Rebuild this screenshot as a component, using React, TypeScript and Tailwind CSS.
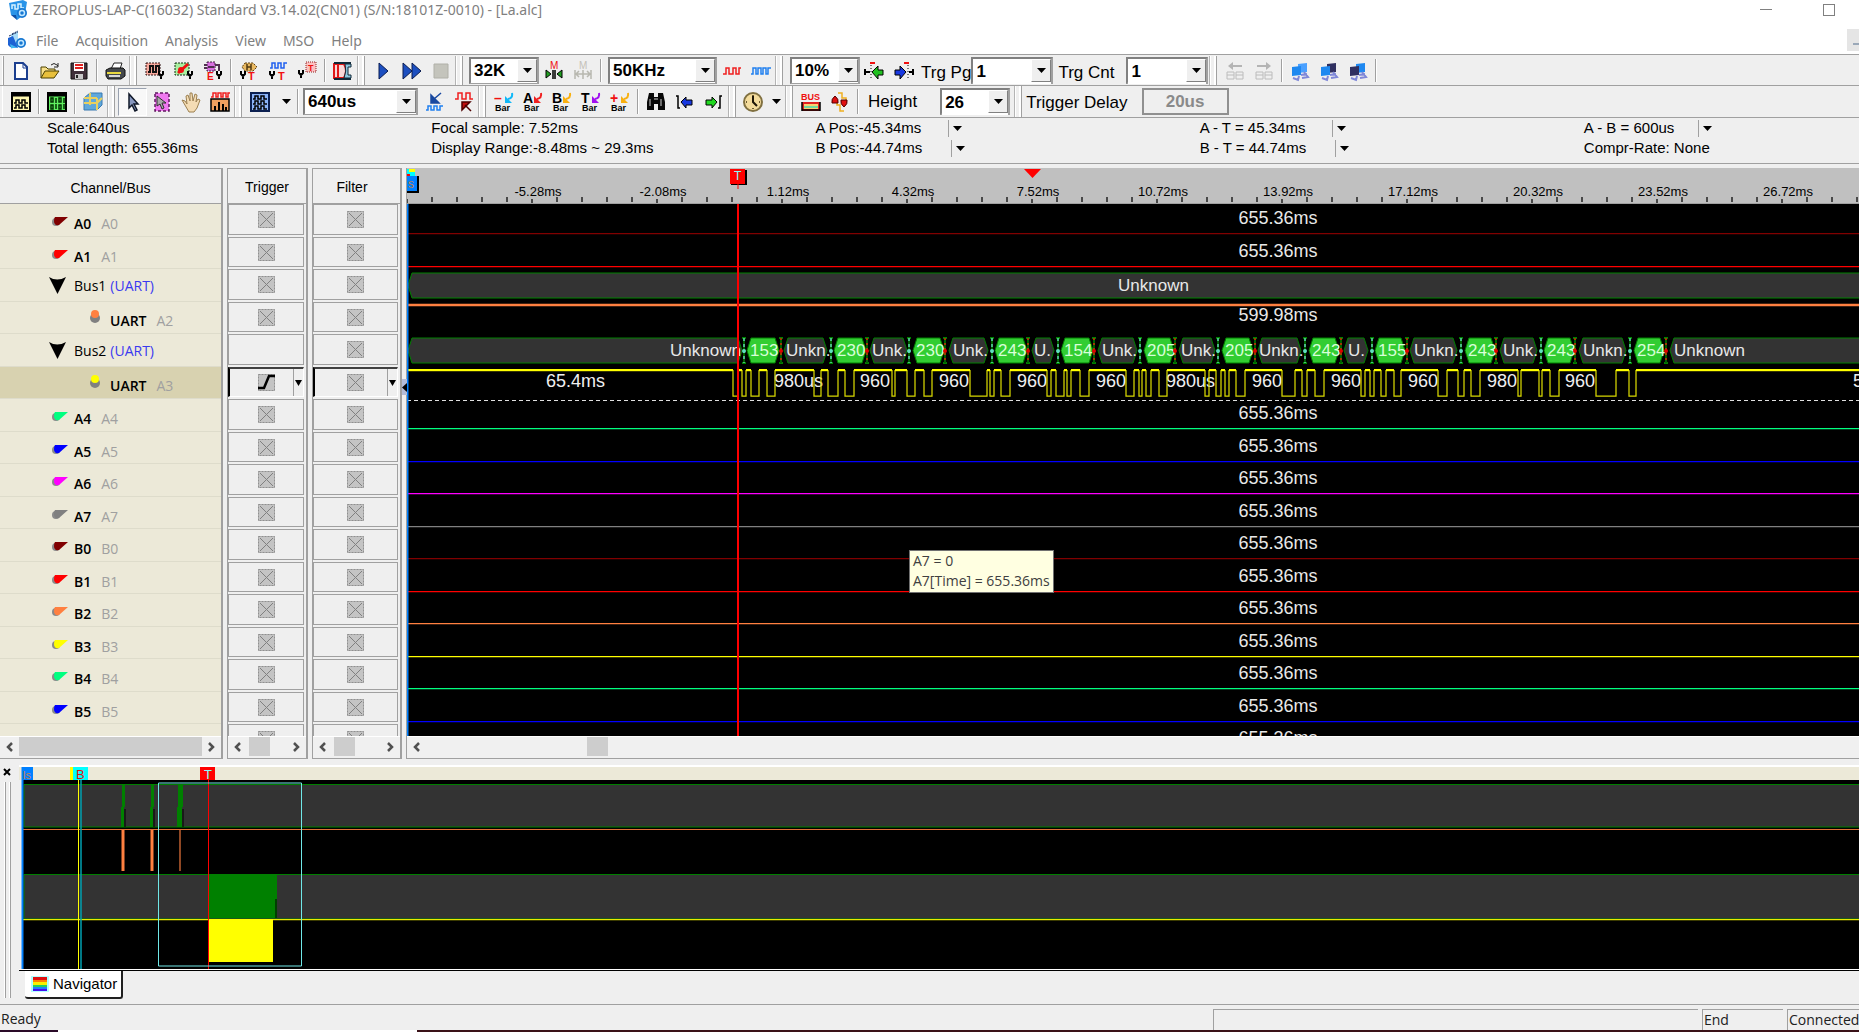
import type { ReactNode } from "react";

type Kind = "port" | "bus" | "pin";

interface Channel {
  kind: Kind;
  name: string;
  alias: string;
  color: string;
}

const channels: Channel[] = [
  { kind: "port", name: "A0", alias: "A0", color: "#800000" },
  { kind: "port", name: "A1", alias: "A1", color: "#ff0000" },
  { kind: "bus", name: "Bus1", alias: "(UART)", color: "#008000" },
  { kind: "pin", name: "UART", alias: "A2", color: "#ff8040" },
  { kind: "bus", name: "Bus2", alias: "(UART)", color: "#008000" },
  { kind: "pin", name: "UART", alias: "A3", color: "#ffff00" },
  { kind: "port", name: "A4", alias: "A4", color: "#00ff80" },
  { kind: "port", name: "A5", alias: "A5", color: "#0000ff" },
  { kind: "port", name: "A6", alias: "A6", color: "#ff00ff" },
  { kind: "port", name: "A7", alias: "A7", color: "#808080" },
  { kind: "port", name: "B0", alias: "B0", color: "#800000" },
  { kind: "port", name: "B1", alias: "B1", color: "#ff0000" },
  { kind: "port", name: "B2", alias: "B2", color: "#ff8040" },
  { kind: "port", name: "B3", alias: "B3", color: "#ffff00" },
  { kind: "port", name: "B4", alias: "B4", color: "#00ff80" },
  { kind: "port", name: "B5", alias: "B5", color: "#0000ff" },
  { kind: "port", name: "B6", alias: "B6", color: "#ff00ff" },
];

const SELECTED = 5;

// x positions where the A3 signal toggles, starting high
const edges = [
  733, 738, 742, 746, 751, 759, 767, 775, 814, 821, 828, 838, 845, 854, 892, 895, 907, 915, 924, 932,
  970, 987, 990, 994, 1001, 1010, 1047, 1051, 1056, 1064, 1067, 1071, 1080, 1089, 1126, 1134, 1139,
  1142, 1146, 1151, 1159, 1167, 1205, 1209, 1216, 1221, 1225, 1229, 1236, 1245, 1282, 1295, 1302,
  1307, 1315, 1324, 1361, 1365, 1370, 1374, 1381, 1386, 1394, 1401, 1438, 1447, 1458, 1464, 1471,
  1480, 1518, 1521, 1539, 1542, 1550, 1559, 1596, 1616, 1629, 1636,
];

// start bit, data start, data end, stop bit, idle start, idle end
const frames: { x: number[]; data: string; idle: string; pad: number }[] = [
  { x: [744, 747, 779, 781, 784, 827], data: "153", idle: "Unkn.", pad: 2 },
  { x: [831, 834, 866, 867, 870, 907], data: "230", idle: "Unk.", pad: 2 },
  { x: [909, 913, 944, 945, 949, 988], data: "230", idle: "Unk.", pad: 4 },
  { x: [992, 995, 1027, 1028, 1032, 1054], data: "243", idle: "U.", pad: 2 },
  { x: [1058, 1061, 1093, 1094, 1098, 1137], data: "154", idle: "Unk.", pad: 4 },
  { x: [1140, 1144, 1174, 1175, 1179, 1215], data: "205", idle: "Unk.", pad: 2 },
  { x: [1218, 1222, 1253, 1255, 1258, 1301], data: "205", idle: "Unkn.", pad: 1 },
  { x: [1305, 1309, 1339, 1341, 1344, 1368], data: "243", idle: "U.", pad: 4 },
  { x: [1372, 1375, 1405, 1407, 1410, 1457], data: "155", idle: "Unkn.", pad: 4 },
  { x: [1461, 1465, 1495, 1496, 1500, 1537], data: "243", idle: "Unk.", pad: 3 },
  { x: [1541, 1544, 1574, 1575, 1579, 1626], data: "243", idle: "Unkn.", pad: 4 },
  { x: [1630, 1634, 1664, 1666, 1670, 3000], data: "254", idle: "Unknown", pad: 4 },
];

const durations: [number, string][] = [
  [546, "65.4ms"], [774, "980us"], [860, "960"], [939, "960"], [1017, "960"], [1096, "960"],
  [1166, "980us"], [1252, "960"], [1331, "960"], [1408, "960"], [1487, "980"], [1565, "960"],
  [1853, "589.5ms"],
];

const rulerLabels = [
  "-5.28ms", "-2.08ms", "1.12ms", "4.32ms", "7.52ms", "10.72ms",
  "13.92ms", "17.12ms", "20.32ms", "23.52ms", "26.72ms", "29.92ms",
];

/* ---------- toolbar pieces ---------- */

const Icon = ({ children }: { children: ReactNode }) => (
  <svg width="20" height="20" viewBox="0 0 20 20" fill="none" className="overflow-visible" aria-hidden="true">
    {children}
  </svg>
);

const Tool = ({ label, pressed, children }: { label: string; pressed?: boolean; children: ReactNode }) => (
  <button
    aria-label={label}
    className={`flex h-[28px] w-[29px] shrink-0 items-center justify-center ${
      pressed ? "border border-r-white border-b-white border-l-gray-400 border-t-gray-400 bg-[#f8f8f8]" : ""
    }`}
  >
    <Icon>{children}</Icon>
  </button>
);

const Sep = () => (
  <div className="flex w-[7px] shrink-0 justify-center self-stretch py-[3px]">
    <div className="w-px bg-[#a0a0a0]" />
    <div className="w-px bg-white" />
  </div>
);

const Grip = () => (
  <div className="flex w-[11px] shrink-0 items-stretch justify-between self-stretch pr-[3px]">
    <div className="w-[2px] border-l border-[#b4b4b4] bg-white" />
    <div className="w-[3px] border-r border-[#a0a0a0] bg-white" />
  </div>
);

const DownArrow = () => (
  <svg width="9" height="5" viewBox="0 0 9 5" aria-hidden="true">
    <path d="M0 0h9L4.500 5z" fill="#000" />
  </svg>
);

const Combo = ({ label, value, width }: { label: string; value: string; width: string }) => (
  <div className={`relative h-[27px] shrink-0 border-2 border-t-[#808080] border-r-[#a0a0a0] border-b-[#a0a0a0] border-l-[#808080] bg-white ${width}`}>
    <select aria-label={label} defaultValue={value} className="h-full w-full appearance-none bg-white pl-[3px] text-[17px] leading-[22px] font-bold text-black outline-none">
      <option>{value}</option>
    </select>
    <div className="pointer-events-none absolute top-0 right-0 flex h-full w-[20px] items-center justify-center border border-t-white border-r-[#808080] border-b-[#808080] border-l-white bg-[#efefef]">
      <DownArrow />
    </div>
  </div>
);

const Pin = ({ x = 14, y = 10 }: { x?: number; y?: number }) => (
  <path d={`M${x - 2} ${y}v3l2 2 2-2v-3M${x} ${y + 3}v5`} stroke="#000" strokeWidth="2" />
);

const BarIcon = ({ letter, fill, arrow }: { letter: string; fill: string; arrow: string }) => (
  <>
    <text x="0" y="11" fontSize="14" fontWeight="bold" fill={fill}>{letter}</text>
    <path d="M18 1q1 5-4 6" stroke={arrow} strokeWidth="2" />
    <path d="M11 4v7h7z" fill={arrow} />
    <text x="1" y="19" fontSize="9" fontWeight="bold" fill="#000">Bar</text>
  </>
);

const Computers = ({ a, b }: { a: string; b: string }) => (
  <>
    <path d="M8 3l9-1v9l-9 1z" fill={b} />
    <path d="M2 6l9-1v9l-9 1z" fill={a} />
    <path d="M3 17l5 2 1-4M11 14l6-1M14 11l4 5-6 1" stroke="#8088d8" strokeWidth="2" />
  </>
);

const Tabs = ({ flip }: { flip?: boolean }) => (
  <>
    <path d={flip ? "M3 4h9V1l5 4-5 4V6H3z" : "M17 4H8V1L3 5l5 4V6h9z"} fill="#b4b4b4" />
    <path d="M2 11h7v7H2zM11 11h7v7h-7zM2 14h7M11 14h7" stroke="#bcbcbc" />
  </>
);

const Logo = ({ tilt }: { tilt?: boolean }) => (
  <svg width="20" height="20" viewBox="0 0 20 20" fill="none" aria-hidden="true">
    {tilt ? (
      <>
        <path d="M4 4l7-3v15l-7 3z" fill="#a8dcf8" />
        <path d="M5 4l6-3M2 6l9-4" stroke="#203060" strokeDasharray="2 1" />
        <path d="M1 8l5-2 5 12-8-1-2-2z" fill="#1d62d4" />
        <path d="M3 14l8 4H4z" fill="#40b8f0" />
      </>
    ) : (
      <>
        <path d="M1 3l14-3 4 2-2 12-8 6-2-4-4-1z" fill="#2a94e8" />
        <path d="M4 9V5h3v4h3V4h3v4h3" stroke="#d8f2ff" strokeWidth="1.500" />
        <path d="M3 15h5l1 5z" fill="#0c50a8" />
      </>
    )}
    <circle cx="14" cy="13" r="5" fill="#1677d2" />
    <circle cx="14" cy="13" r="2.500" stroke="#bfe6ff" strokeWidth="1.500" />
  </svg>
);

const FileTools = () => (
  <div className="flex h-[30px] items-center border-b border-[#a0a0a0]">
    <div className="ml-[2px] mr-[2px] w-[2px] self-stretch border-r border-[#a0a0a0] bg-white" />
    <Tool label="New">
      <path d="M4 2h8l4 4v12H4z" fill="#fff" stroke="#1c3f8f" strokeWidth="2" />
      <path d="M12 2v5h5" stroke="#1c3f8f" />
    </Tool>
    <Tool label="Open">
      <path d="M1 17V6h5l2 2h7v3" fill="#f8e08a" stroke="#4a4000" />
      <path d="M1 17l4-7h14l-5 7z" fill="#e8c03c" stroke="#4a4000" />
      <path d="M11 4q3-3 6 0l1 1M18 2v4h-4" stroke="#222" />
    </Tool>
    <Tool label="Save">
      <path d="M2 2h16v16H2z" fill="#40303a" stroke="#111" />
      <path d="M5 2h10v8H5z" fill="#fff" />
      <path d="M6 4h8M6 7h8" stroke="#e02020" strokeWidth="2" />
      <path d="M6 13h8v5H6z" fill="#c8c8c8" />
      <path d="M7 14h2v3H7z" fill="#222" />
    </Tool>
    <Sep />
    <Tool label="Print">
      <path d="M6 8l3-6h8l-2 6z" fill="#fff" stroke="#222" />
      <path d="M1 9l4-2h13l2 2v6l-4 3H3l-2-3z" fill="#44484c" stroke="#111" />
      <path d="M2 12h14" stroke="#e8d840" strokeWidth="2" />
      <path d="M4 15h11" stroke="#d8d8d8" strokeWidth="2" />
    </Tool>
    <Grip />
    <Tool label="Signal trigger">
      <path d="M1 2h14v12H1z" fill="#f6a89c" stroke="#301010" strokeDasharray="2 1" />
      <path d="M3 11h2V5h3v6h3V5h3v6" stroke="#111" strokeWidth="2" />
      <Pin x={16} y={10} />
    </Tool>
    <Tool label="Edge trigger">
      <path d="M1 2h14v12H1z" fill="#a8f0a0" stroke="#103010" strokeDasharray="2 1" />
      <path d="M4 12L14 3" stroke="#f01010" strokeWidth="3" />
      <circle cx="7" cy="9" r="3" fill="#f01010" />
      <Pin x={16} y={10} />
    </Tool>
    <Tool label="Event trigger">
      <path d="M4 1h8v9H4z" fill="#d870e0" stroke="#402040" strokeDasharray="2 1" />
      <path d="M1 4h3M1 7h3M12 4h4v6M5 6h6" stroke="#503050" strokeWidth="2" />
      <text x="4" y="19" fontSize="10" fontWeight="bold" fill="#f01010">E</text>
      <Pin x={16} y={10} />
    </Tool>
    <Sep />
    <Tool label="Trigger content">
      <path d="M6 2h8l4 4-4 4H6L3 6z" fill="#e8b860" stroke="#604010" strokeDasharray="2 1" />
      <path d="M8 3v6M12 3v6M8 6h4" stroke="#503810" strokeWidth="1.500" />
      <text x="9" y="19" fontSize="11" fontWeight="bold" fill="#f01010">T</text>
      <Pin x={4} y={10} />
    </Tool>
    <Tool label="Trigger width">
      <path d="M2 7h2V2h3v5h3V2h3v5h3V2h3" stroke="#2060f0" strokeWidth="1.500" />
      <text x="10" y="19" fontSize="11" fontWeight="bold" fill="#f01010">T</text>
      <Pin x={4} y={10} />
    </Tool>
    <Tool label="Trigger range">
      <path d="M9 1h10v10H9z" fill="#fbc0c0" stroke="#902020" strokeDasharray="1 1" />
      <text x="11" y="10" fontSize="9" fontWeight="bold" fill="#f01010">T</text>
      <Pin x={4} y={9} />
    </Tool>
    <Sep />
    <Tool label="Statistics">
      <path d="M1 3h10q4 7 0 14H1z" fill="#f8d8d8" stroke="#e01818" strokeWidth="2" />
      <path d="M5 3v14" stroke="#e01818" strokeWidth="2" />
      <path d="M1 2h17M1 18h17" stroke="#102838" strokeWidth="2" />
      <path d="M12 3h6v3h-3v8h3v3h-7q3-7 1-14z" fill="#8cc8e0" stroke="#102838" />
    </Tool>
    <Grip />
    <Tool label="Run">
      <path d="M6 2l9 8-9 8z" fill="#1c4fc0" stroke="#0a1c50" />
    </Tool>
    <Tool label="Repeat run">
      <path d="M1 2l9 8-9 8zM10 2l9 8-9 8z" fill="#1c4fc0" stroke="#0a1c50" />
    </Tool>
    <Tool label="Stop">
      <path d="M3 3h14v14H3z" fill="#c4c4bc" stroke="#b0b0a8" />
    </Tool>
    <Grip />
    <div className="w-[3px] shrink-0" />
    <Combo label="Memory depth" value="32K" width="w-[70px]" />
    <Tool label="Memory fit">
      <text x="6" y="8" fontSize="10" fill="#f01010">M</text>
      <path d="M2 9l5 4-5 4zM18 9l-5 4 5 4z" fill="#20a020" stroke="#000" />
      <path d="M9 9v9M11 9v9" stroke="#000" strokeWidth="1.500" />
    </Tool>
    <Tool label="Memory spread">
      <text x="6" y="8" fontSize="10" fill="#c4c0b8">M</text>
      <path d="M2 9v9M18 9v9M10 9v9M4 13h12M6 10l-3 3 3 3M14 10l3 3-3 3" stroke="#b8b8b0" strokeWidth="1.500" />
    </Tool>
    <Sep />
    <div className="w-1 shrink-0" />
    <Combo label="Sampling rate" value="50KHz" width="w-[109px]" />
    <Tool label="Slower">
      <path d="M1 13h3V7h3v6h4V7h3v6h3V7h2" stroke="#f02020" strokeWidth="1.500" />
    </Tool>
    <Tool label="Faster">
      <path d="M0 13h2V7h3v6h2V7h3v6h2V7h3v6h2V7h3" stroke="#2080f0" strokeWidth="1.500" />
    </Tool>
    <Grip />
    <div className="w-1 shrink-0" />
    <Combo label="Trigger position" value="10%" width="w-[70px]" />
    <Tool label="Trigger left">
      <path d="M7 11l6-6v4h5v5h-5v4z" fill="#20c020" stroke="#000" />
      <path d="M6 1v18" stroke="#000" strokeDasharray="1 2" />
      <path d="M5 2h5" stroke="#f01010" strokeWidth="2" />
      <path d="M0 8v6M1 11h4" stroke="#000" strokeWidth="2" />
    </Tool>
    <Tool label="Trigger right">
      <path d="M12 11L6 5v4H1v5h5v4z" fill="#1838e0" stroke="#000" />
      <path d="M14 1v18" stroke="#000" strokeDasharray="1 2" />
      <path d="M10 2h5" stroke="#f01010" strokeWidth="2" />
      <path d="M19 8v6M15 11h3" stroke="#000" strokeWidth="2" />
    </Tool>
    <label className="ml-[3px] flex shrink-0 items-center text-[17px]">
      <span className="pt-1">Trg Pg</span>
      <Combo label="Trigger page" value="1" width="w-[82px]" />
    </label>
    <label className="ml-[5px] flex shrink-0 items-center gap-3 text-[17px]">
      <span className="pt-1">Trg Cnt</span>
      <Combo label="Trigger count" value="1" width="w-[82px]" />
    </label>
    <div className="w-px shrink-0" />
    <Grip />
    <Tool label="Previous page"><Tabs /></Tool>
    <Tool label="Next page"><Tabs flip /></Tool>
    <Sep />
    <Tool label="Connect all"><Computers a="#1e88f0" b="#4aa0ff" /></Tool>
    <Tool label="Connect first"><Computers a="#1e88f0" b="#303060" /></Tool>
    <Tool label="Connect second"><Computers a="#303060" b="#1e88f0" /></Tool>
    <Sep />
  </div>
);

const ViewTools = () => (
  <div className="flex h-[32px] items-center border-b border-[#a0a0a0]">
    <div className="ml-[2px] mr-[3px] w-px self-stretch bg-white" />
    <Tool label="Waveform view">
      <path d="M1 1h18v18H1z" fill="#fff8b0" stroke="#000" strokeWidth="2" />
      <path d="M1 3h18" stroke="#000" strokeWidth="3" />
      <path d="M3 11h2V8h3v3h3V8h3v3h3M3 16h2v-3h3v3h3v-3h3v3h3" stroke="#000" strokeWidth="1.500" />
    </Tool>
    <Sep />
    <Tool label="State view">
      <path d="M1 1h18v18H1z" fill="#60f060" stroke="#000" strokeWidth="2" />
      <path d="M1 3h18" stroke="#000" strokeWidth="3" />
      <path d="M4 6h2v4H4zM12 6h2v4h-2zM4 13h2v4H4zM12 13h2v4h-2zM9 6v5M17 6v5M9 12v5M17 12v5" stroke="#003000" strokeWidth="1.500" />
    </Tool>
    <Sep />
    <Tool label="Package view">
      <path d="M1 6l6-5h12v12l-5 5H1z" fill="#5fa8dc" stroke="#3878b0" />
      <path d="M7 1v12M1 11h13l5-5M14 6v12M1 6h13" stroke="#e8d060" strokeWidth="2" />
    </Tool>
    <Grip />
    <Tool label="Select" pressed>
      <path d="M6 2v14l3-3 3 6 2-1-3-6h4z" fill="#8898c0" stroke="#101828" strokeWidth="1.500" />
    </Tool>
    <Tool label="Select area">
      <path d="M3 1h14v18H3z" fill="#f078f0" stroke="#601860" strokeWidth="1.500" strokeDasharray="3 2" />
      <path d="M5 4v10l3-2 2 5 2-1-2-5h4z" fill="#a8a8a8" stroke="#303030" />
    </Tool>
    <Tool label="Hand">
      <path d="M1 8l3 1 2 3-1-8 2-1 2 6V1h2l1 8 2-7 2 1-1 7 2-3 2 1-3 8-3 4H8z" fill="#f4dcb4" stroke="#9c8050" />
    </Tool>
    <Tool label="Normal waveform">
      <path d="M1 5h2V1h3v4h2V1h3v4h2V1h3v4h2V1h2" stroke="#f02020" strokeWidth="1.500" />
      <path d="M1 7h18v12H1z" fill="#f0a060" stroke="#000" strokeWidth="1.500" />
      <path d="M5 19v-5M9 19V10M13 19v-7M16 19v-4" stroke="#000" strokeWidth="2" />
    </Tool>
    <Grip />
    <Tool label="Waveform mode">
      <path d="M1 1h18v18H1z" fill="#8cb4f8" stroke="#0c2050" strokeWidth="2" />
      <path d="M3 7h2V4h3v3h3V4h3v3h3M3 12h2V9h3v3h3V9h3v3h3M3 17h2v-3h3v3h3v-3h3v3h3" stroke="#000" strokeWidth="1.500" />
    </Tool>
    <button aria-label="Waveform mode options" className="flex w-[17px] justify-end"><DownArrow /></button>
    <div className="w-[3px] shrink-0" />
    <Sep />
    <div className="w-[2px] shrink-0" />
    <Combo label="Time scale" value="640us" width="w-[115px]" />
    <div className="w-[2px] shrink-0" />
    <Tool label="Zoom in">
      <path d="M6 3v8h8zM9 7l7-6" fill="#1848a0" stroke="#1848a0" strokeWidth="1.500" />
      <path d="M1 18h2v-4h3v4h3v-4h3v4h3v-4h3" stroke="#2080f0" strokeWidth="1.500" />
    </Tool>
    <Tool label="Zoom out">
      <path d="M1 7h3V1h4v6h4V1h4v6h3" stroke="#f02020" strokeWidth="1.500" />
      <path d="M8 10h8l-8 8zM11 13l6 6" fill="#c01010" stroke="#500000" strokeWidth="1.500" />
    </Tool>
    <Grip />
    <Tool label="Delete bar"><BarIcon letter="–" fill="#f01010" arrow="#10b8f8" /></Tool>
    <Tool label="A bar"><BarIcon letter="A" fill="#000" arrow="#f02020" /></Tool>
    <Tool label="B bar"><BarIcon letter="B" fill="#000" arrow="#f8b010" /></Tool>
    <Tool label="T bar"><BarIcon letter="T" fill="#000" arrow="#a010f0" /></Tool>
    <Tool label="Add bar"><BarIcon letter="+" fill="#f01010" arrow="#f8b010" /></Tool>
    <Sep />
    <Tool label="Find">
      <path d="M3 1h5v4h4V1h5l2 9v8h-7v-6H8v6H1v-8z" fill="#080808" />
      <path d="M4 7v7M15 7v7M8 7h4" stroke="#d0d0d0" />
    </Tool>
    <Tool label="Previous edge">
      <path d="M1 4h2v12h2" stroke="#000" strokeWidth="1.500" />
      <path d="M6 10l5-5v3h6v5h-6v3z" fill="#1838e0" stroke="#000" />
    </Tool>
    <Tool label="Next edge">
      <path d="M18 4h-2v12h-2" stroke="#000" strokeWidth="1.500" />
      <path d="M13 10L8 5v3H2v5h6v3z" fill="#20d820" stroke="#000" />
    </Tool>
    <Grip />
    <Tool label="Time mode">
      <circle cx="9" cy="10" r="9" fill="#f4dc9c" stroke="#807040" strokeWidth="2" />
      <path d="M9 4v6l4 4" stroke="#201808" strokeWidth="2" />
      <path d="M9 3v1M9 16v1M2 10h1M15 10h1" stroke="#403010" strokeWidth="1.500" />
    </Tool>
    <button aria-label="Time mode options" className="flex w-[17px] justify-center"><DownArrow /></button>
    <Grip />
    <Tool label="Bus property">
      <text x="0" y="8" fontSize="9" fontWeight="bold" fill="#f01010">BUS</text>
      <path d="M2 11h16v7H2z" fill="#f8d070" stroke="#e02020" strokeWidth="2" />
      <path d="M3 15h14" stroke="#70d8a0" strokeWidth="2" />
      <path d="M1 10v9M19 10v9M1 18h18" stroke="#000" strokeWidth="1.500" />
    </Tool>
    <Tool label="Noise filter">
      <path d="M8 1h4v5h4v4M7 9v4h3v6h4" stroke="#f0b020" strokeWidth="1.500" />
      <path d="M5 4q4 3 3 7H2q-1-4 3-7zM14 15q-4-3-3-7h6q1 4-3 7z" fill="#e01010" stroke="#500000" />
    </Tool>
    <Sep />
    <label className="ml-[7px] flex shrink-0 items-center gap-[23px] text-[17px]">
      <span className="pt-px">Height</span>
      <Combo label="Row height" value="26" width="w-[70px]" />
    </label>
    <div className="w-[4px] shrink-0" />
    <Grip />
    <label className="flex shrink-0 items-center gap-[14px] text-[17px]">
      <span className="pt-[3px] pl-px">Trigger Delay</span>
      <input
        readOnly
        value="20us"
        className="h-[27px] w-[87px] border-2 border-[#909090] bg-[#efefef] text-center text-[17px] font-bold text-[#8a8a8a] outline-none"
      />
    </label>
  </div>
);

/* ---------- info strip ---------- */

const Readout = ({ text, width }: { text: string; width: string }) => (
  <div className="flex h-5 items-center">
    <span className={width}>{text}</span>
    <button aria-label={`${text} options`} className="flex h-[17px] items-center border-l border-[#a0a0a0] pl-1">
      <DownArrow />
    </button>
  </div>
);

const InfoStrip = () => (
  <div className="grid grid-cols-[384fr_384fr_384fr_384fr_275fr] border-b border-[#a0a0a0] pb-[5px] pl-[47px] text-[15px] leading-5 whitespace-nowrap">
    <div>
      <p>Scale:640us</p>
      <p>Total length: 655.36ms</p>
    </div>
    <div>
      <p>Focal sample: 7.52ms</p>
      <p>Display Range:-8.48ms ~ 29.3ms</p>
    </div>
    <div>
      <Readout text="A Pos:-45.34ms" width="w-[133px]" />
      <Readout text="B Pos:-44.74ms" width="w-[136px]" />
    </div>
    <div>
      <Readout text="A - T = 45.34ms" width="w-[132px]" />
      <Readout text="B - T = 44.74ms" width="w-[135px]" />
    </div>
    <div>
      <Readout text="A - B = 600us" width="w-[114px]" />
      <p>Compr-Rate: None</p>
    </div>
  </div>
);

/* ---------- channel panels ---------- */

const Chevron = ({ right }: { right?: boolean }) => (
  <svg width="7" height="10" viewBox="0 0 7 10" fill="none" aria-hidden="true">
    <path d={right ? "M1 1l4 4-4 4" : "M6 1L2 5l4 4"} stroke="#505050" strokeWidth="2.500" />
  </svg>
);

const ScrollBar = ({ thumb, offset = "", open }: { thumb: string; offset?: string; open?: boolean }) => (
  <div className="flex h-[22px] items-stretch border-t border-white bg-[#f0f0f0] pb-[2px]">
    <button aria-label="Scroll left" className="flex w-[19px] items-center justify-center"><Chevron /></button>
    <div className="flex min-w-0 flex-1">
      <div className={`bg-[#cdcdcd] ${thumb} ${offset}`} />
    </div>
    {!open && (
      <button aria-label="Scroll right" className="flex w-[19px] items-center justify-center"><Chevron right /></button>
    )}
  </div>
);

const ChannelMark = ({ kind, color }: { kind: Kind; color: string }) => {
  if (kind === "bus") {
    return (
      <svg width="17" height="17" viewBox="0 0 17 17" aria-hidden="true">
        <path d="M0 0q8 5 17 0L8.500 17z" fill="#000" />
      </svg>
    );
  }
  if (kind === "pin") {
    return (
      <svg width="10" height="13" viewBox="0 0 10 13" aria-hidden="true">
        <circle cx="5" cy="8" r="5" fill="#808080" />
        <circle cx="5" cy="4" r="4" fill={color} />
      </svg>
    );
  }
  return (
    <svg width="17" height="11" viewBox="0 0 17 11" aria-hidden="true">
      <circle cx="4" cy="6" r="4" fill="#8a8a8a" />
      <path d="M3 1h13L7 9q-5 1-5-4 0-3 1-4z" fill={color} />
    </svg>
  );
};

const rowClass: Record<Kind, string> = {
  port: "pl-[52px] pt-[7px]",
  bus: "pl-[49px] pt-px",
  pin: "pl-[90px] pt-[6px]",
};

const ChannelPanel = () => (
  <section className="flex w-[223px] shrink-0 flex-col border-t border-r-2 border-b border-[#a0a0a0]">
    <h2 className="flex h-[35px] items-center justify-center border-b border-[#a0a0a0] pt-1 text-[14px]">Channel/Bus</h2>
    <ul className="h-[532px] overflow-hidden bg-[#ece9d8] font-['Open_Sans'] text-[14px]">
      {channels.map((ch, i) => (
        <li
          key={i}
          className={`flex h-[33px] items-center border-b border-[#dedccb] even:h-[32px] ${rowClass[ch.kind]} ${
            i === SELECTED ? "bg-[#d8d2b0]" : ""
          }`}
        >
          <span className={ch.kind === "bus" ? "w-[25px]" : ch.kind === "pin" ? "w-5 pb-[8px]" : "w-[22px] pb-1"}>
            <ChannelMark kind={ch.kind} color={ch.color} />
          </span>
          <span className={ch.kind === "bus" ? "text-black" : "font-semibold text-black"}>{ch.name}</span>
          <span className={ch.kind === "bus" ? "ml-1 text-[#3a3af0]" : "ml-[10px] text-[#a0a0a0]"}>{ch.alias}</span>
        </li>
      ))}
    </ul>
    <ScrollBar thumb="flex-1" />
  </section>
);

const CrossBox = ({ rising }: { rising?: boolean }) => (
  <svg width="17" height="17" viewBox="0 0 17 17" fill="none" aria-hidden="true">
    <path d="M0 0h17v17H0z" fill="#c4c4c4" />
    <path d="M.5.5h16v16H.5z" stroke="#909090" strokeDasharray="2 1" />
    {rising ? (
      <path d="M0 14h6L11 2h6" stroke="#000" strokeWidth="2.500" />
    ) : (
      <path d="M2 2l13 13M15 2L2 15" stroke="#808080" />
    )}
  </svg>
);

const CellPanel = ({ title, width, trigger }: { title: string; width: string; trigger?: boolean }) => (
  <section className={`flex shrink-0 flex-col border border-r-2 border-[#a0a0a0] ${width}`}>
    <h2 className={`flex h-[35px] items-center justify-center border-b border-[#a0a0a0] pt-[2px] text-[14px] ${trigger ? "" : "pr-[9px]"}`}>
      {title}
    </h2>
    <div className="h-[532px] overflow-hidden pr-[2px]">
      {channels.map((ch, i) => (
        <div key={i} className="h-[33px] pb-[2px] even:h-[32px]">
          <button
            aria-label={`${title} ${ch.name} ${ch.alias}`}
            className={`flex h-full w-full items-center ${
              i === SELECTED
                ? "border-t-2 border-l-2 border-r border-b border-t-[#404040] border-r-white border-b-white border-l-black"
                : "border border-[#a0a0a0]"
            }`}
          >
            <span className={`flex flex-1 justify-center ${i === SELECTED ? "pl-[9px]" : ""}`}>
              {!(trigger && i === 4) && <CrossBox rising={trigger && i === SELECTED} />}
            </span>
            {i === SELECTED && (
              <span className="flex h-full w-[10px] items-center justify-center border-l border-[#a0a0a0]">
                <svg width="7" height="6" viewBox="0 0 7 6" aria-hidden="true">
                  <path d="M0 0h7L3.500 6z" fill="#000" />
                </svg>
              </span>
            )}
          </button>
        </div>
      ))}
    </div>
    <ScrollBar thumb="w-[21px]" offset="ml-[2px]" />
  </section>
);

/* ---------- waveforms ---------- */

const signalPath = (high: number, low: number) => {
  let d = `M407 ${high}`;
  edges.forEach((x, i) => {
    d += i % 2 === 0 ? `H${x}V${low}` : `H${x}V${high}`;
  });
  return `${d}H3000`;
};

const highPath = () => {
  let d = "M407 370";
  edges.forEach((x, i) => {
    d += i % 2 === 0 ? `H${x}` : `M${x} 370`;
  });
  return `${d}H3000`;
};

const hex = (a: number, b: number, top: number, h: number) =>
  `M${a + 4} ${top}H${b - 4}L${b} ${top + h / 2}L${b - 4} ${top + h}H${a + 4}L${a} ${top + h / 2}z`;

const Ruler = () => (
  <svg className="block h-[36px] w-full bg-[#c0c0c0]" aria-label="Time ruler">
    <g transform="translate(-407 -168)">
      {Array.from({ length: 90 }, (_, i) => (
        <path key={i} d={i % 5 === 0 ? `M${407 + i * 25} 199v5` : `M${407 + i * 25} 197v5`} stroke="#000" strokeWidth="1.250" />
      ))}
      {rulerLabels.map((label, i) => (
        <text key={label} x={538 + i * 125} y="196" textAnchor="middle" fontSize="13" fill="#000">{label}</text>
      ))}
      <path d="M407 169h8v7h-8z" fill="#00ffff" />
      <path d="M409 169h6v3h-6z" fill="#ffff00" />
      <path d="M407 174h3v2h-3z" fill="#f00" />
      <path d="M407 176h12v17h-12z" fill="#000" />
      <path d="M407 176h10v15h-10z" fill="#0080ff" />
      <text x="408" y="188" fontSize="12" fill="#c08050">s</text>
      <path d="M731 170h16v15h-16z" fill="#000" />
      <path d="M730 169h15v15h-15z" fill="#f00" />
      <text x="734" y="180" fontSize="12" fill="#80ffff">T</text>
      <path d="M738 184v5" stroke="#f00" />
      <path d="M1024 169h17l-8.500 9z" fill="#f00" />
      <path d="M407 203.500h3000" stroke="#a0a0a0" />
    </g>
  </svg>
);

const Waveforms = () => (
  <svg className="block h-[532px] w-full bg-black" aria-label="Waveforms">
    <g transform="translate(-407 -204)">
      {channels.map((ch, i) =>
        ch.kind === "port" ? (
          <g key={i}>
            <path d={`M407 ${Math.round(233 + i * 32.5) + 0.5}H3000`} stroke={ch.color} strokeWidth="1.250" />
            <text x="1278" y={Math.floor(224.5 + i * 32.5)} textAnchor="middle" fontSize="18" fill="#e8e8e8">655.36ms</text>
          </g>
        ) : null
      )}

      <path d={hex(408, 3000, 273, 25)} fill="#333" stroke="#008000" />
      <text x="1118" y="291" fontSize="17" fill="#e8e8e8">Unknown</text>
      <path d="M407 305H3000" stroke="#ff8040" strokeWidth="2.500" />
      <text x="1278" y="321" textAnchor="middle" fontSize="18" fill="#e8e8e8">599.98ms</text>

      <path d={hex(408, 742, 338, 25)} fill="#333" stroke="#008000" />
      <text x="670" y="356" fontSize="17" fill="#e8e8e8">Unknown</text>
      {frames.map(({ x, data, idle, pad }) => (
        <g key={x[0]}>
          <path d={hex(x[1], x[2], 338, 25)} fill="#32cd32" stroke="#008000" />
          <path d={hex(x[4], x[5], 338, 25)} fill="#333" stroke="#008000" />
          <path d={`M${x[0] - 2} 338h4M${x[0] - 2} 363h4M${x[3] - 2} 338h4M${x[3] - 2} 363h4`} stroke="#008000" strokeWidth="2" />
          <path d={`M${x[0]} 338v25M${x[3]} 338v25`} stroke="#006000" strokeWidth="2" />
          <path d={`M${x[0]} 338v25`} stroke="#60d8b0" strokeWidth="1.500" strokeDasharray="3 3" />
          <path d={`M${x[3]} 338v25`} stroke="#d03000" strokeWidth="1.500" strokeDasharray="2 3" />
          <text x={x[1] + 3} y="356" fontSize="17" fill="#d8ffd8">{data}</text>
          <text x={x[4] + pad} y="356" fontSize="17" fill="#e8e8e8">{idle}</text>
          <circle cx={x[0]} cy="351" r="2" fill="#60e0c0" />
          <circle cx={x[3]} cy="351" r="2" fill="#e00000" />
        </g>
      ))}

      {durations.map(([x, label]) => (
        <text key={x} x={x} y="387" fontSize="18" fill="#f0f0f0">{label}</text>
      ))}
      <path d={signalPath(370.5, 396)} fill="none" stroke="#d8d800" strokeWidth="1.250" />
      <path d={highPath()} fill="none" stroke="#ffff00" strokeWidth="2" />
      <path d="M407 400.500H3000" stroke="#e0e0e0" strokeDasharray="4 3" />

      <path d="M407.500 204v532" stroke="#0080ff" strokeWidth="2" />
      <path d="M738 204v532" stroke="#f00" strokeWidth="2" />
    </g>
  </svg>
);

const WavePanel = () => (
  <section className="relative flex min-w-0 flex-1 flex-col border-t border-b border-l border-[#a0a0a0]">
    <div className="-mt-px">
      <Ruler />
    </div>
    <Waveforms />
    <ScrollBar thumb="w-[21px]" offset="ml-[161px]" open />
    <div className="absolute top-[210px] -left-[5px] flex h-4 w-[5px] items-center bg-[#b4bcd8]">
      <svg width="5" height="9" viewBox="0 0 5 9" aria-hidden="true">
        <path d="M5 0v9L0 4.500z" fill="#000" />
      </svg>
    </div>
    <div role="tooltip" className="absolute top-[381px] left-[502px] border border-[#707070] bg-[#ffffe1] px-[3px] pb-px font-['Open_Sans'] text-[14px] leading-5 whitespace-nowrap text-[#404040]">
      <p>A7 = 0</p>
      <p>A7[Time] = 655.36ms</p>
    </div>
  </section>
);

/* ---------- navigator ---------- */

const Navigator = () => (
  <section className="flex pt-[6px]">
    <div className="flex w-[19px] shrink-0 flex-col">
      <button aria-label="Close navigator" className="flex h-[14px] w-[11px] items-center justify-end">
        <svg width="8" height="8" viewBox="0 0 8 8" aria-hidden="true">
          <path d="M1 1l6 6M7 1L1 7" stroke="#000" strokeWidth="2" />
        </svg>
      </button>
      <div className="mt-[3px] mb-[6px] ml-1 flex w-[7px] flex-1 justify-between">
        <div className="w-[2px] border-r border-[#a0a0a0] bg-white" />
        <div className="w-[2px] border-r border-[#a0a0a0] bg-white" />
      </div>
    </div>
    <div className="min-w-0 flex-1">
      <svg className="block h-[206px] w-full" aria-label="Capture overview">
        <g transform="translate(-19 -765)">
          <path d="M19 765h3000v2H19z" fill="#fff" />
          <path d="M19 767h3000v13H19z" fill="#ece9d8" />
          <path d="M22 780h3000v189H22z" fill="#000" />
          <path d="M24 784.500H3000V827H24z" fill="#333" stroke="#008000" />
          <path d="M24 874.500H3000V919H24z" fill="#333" stroke="#008000" />
          <path d="M22 829.500H3000" stroke="#e07038" />
          <path d="M22 919.500H3000" stroke="#e8e800" strokeWidth="1.250" />
          <path d="M122 784h3v23h-1v20h-3v-20h1zM151 784h3v23h-1v20h-3v-20h1zM178 784h5v23h-1v20h-5v-20h1z" fill="#008000" />
          <path d="M125 809v18M154 809v18M183 809v18" stroke="#000" />
          <path d="M123 830v41M152 830v41" stroke="#ff8040" strokeWidth="3" />
          <path d="M180 830v41" stroke="#c06030" strokeWidth="1.500" />
          <path d="M209 874h68v44h-68z" fill="#008000" />
          <path d="M276 899v19" stroke="#000" />
          <path d="M209 919h64v43h-64z" fill="#ff0" />
          <path d="M22.500 767v202" stroke="#0080ff" strokeWidth="2" />
          <path d="M22 767h11v13H22z" fill="#0080ff" />
          <text x="23" y="779" fontSize="11" fill="#c08050">ls</text>
          <path d="M70 767h6v13h-6z" fill="#ff0" />
          <path d="M73 767h15v13H73z" fill="#0ff" />
          <text x="76" y="779" fontSize="13" fill="#e01010">B</text>
          <path d="M78.500 780v189" stroke="#ff0" />
          <path d="M81 780v189" stroke="#00a0b0" strokeWidth="1.500" />
          <path d="M200 767h15v13h-15z" fill="#f00" />
          <text x="204" y="779" fontSize="13" fill="#80ffff">T</text>
          <path d="M208.500 780v189" stroke="#f00" />
          <path d="M158.500 783h143v183h-143z" fill="none" stroke="#70e8e8" />
          <path d="M19 969h3000v1H19z" fill="#fff" />
          <path d="M19 970h3000v1H19z" fill="#000" />
        </g>
      </svg>
      <div className="flex h-[33px]">
        <button className="ml-[6px] flex h-[28px] w-[98px] items-center gap-1 rounded-b-[3px] border-r-2 border-b-2 border-[#202020] bg-white pl-[6px] text-[15px]">
          <svg width="18" height="16" viewBox="0 0 18 16" aria-hidden="true">
            <path d="M0 0h18v16H0z" fill="#b0ffff" />
            <path d="M2 1h14v3H2z" fill="#e01010" />
            <path d="M2 4h14v2H2z" fill="#ff8000" />
            <path d="M2 6h14v3H2z" fill="#f8f000" />
            <path d="M2 9h14v2H2z" fill="#20d060" />
            <path d="M2 11h14v2H2z" fill="#2080ff" />
            <path d="M2 13h14v2H2z" fill="#4010f0" />
          </svg>
          <span>Navigator</span>
        </button>
      </div>
    </div>
  </section>
);

const StatusBar = () => (
  <footer className="flex h-[26px] border-t border-[#a0a0a0] pt-1 font-['Open_Sans'] text-[14px] leading-[20px] text-[#202020]">
    <span className="flex-1 pl-px">Ready</span>
    <span className="w-[485px] border-t border-l border-[#a0a0a0]" />
    <span className="ml-1 w-[81px] border-t border-l border-[#a0a0a0] pl-px">End</span>
    <span className="ml-1 w-[72px] overflow-hidden border-t border-l border-[#a0a0a0] pl-px">Connected</span>
  </footer>
);

const menus = ["File", "Acquisition", "Analysis", "View", "MSO", "Help"];

export default function App() {
  return (
    <div className="flex flex-col overflow-hidden bg-[#efefef] font-['Liberation_Sans',sans-serif] text-black">
      <header className="bg-white font-['Noto_Sans',sans-serif] text-[#808080]">
        <div className="flex h-[26px] items-start gap-[5px] pl-2">
          <Logo />
          <h1 className="flex-1 text-[14px] leading-[19px]">
            ZEROPLUS-LAP-C(16032) Standard V3.14.02(CN01) (S/N:18101Z-0010) - [La.alc]
          </h1>
          <button aria-label="Minimize" className="mt-[3px] mr-[46px] h-[13px] w-3">
            <div className="h-px w-3 bg-[#808080]" />
          </button>
          <button aria-label="Maximize" className="mt-1 mr-6 h-3 w-3 border border-[#808080]" />
        </div>
        <div className="flex h-[28px] items-center pl-[7px]">
          <Logo tilt />
          <nav className="ml-[9px] flex flex-1 gap-[17px] text-[14px]">
            {menus.map((m) => (
              <button key={m}>{m}</button>
            ))}
          </nav>
          <button aria-label="Minimize document" className="flex h-[22px] w-3 items-center justify-end bg-[#e5e5e5]">
            <div className="mt-2 h-[2px] w-[6px] bg-[#9aa8b8]" />
          </button>
        </div>
      </header>
      <div className="border-t border-[#a0a0a0] pt-px">
        <FileTools />
        <ViewTools />
        <InfoStrip />
      </div>
      <main className="flex gap-1 pt-1">
        <ChannelPanel />
        <CellPanel title="Trigger" width="w-[81px]" trigger />
        <CellPanel title="Filter" width="w-[90px]" />
        <WavePanel />
      </main>
      <Navigator />
      <StatusBar />
      <div className="flex h-[2px]">
        <div className="w-[58px] bg-[#2a0a28]" />
        <div className="w-[359px] bg-white" />
        <div className="flex-1 bg-[#3a1218]" />
      </div>
    </div>
  );
}
